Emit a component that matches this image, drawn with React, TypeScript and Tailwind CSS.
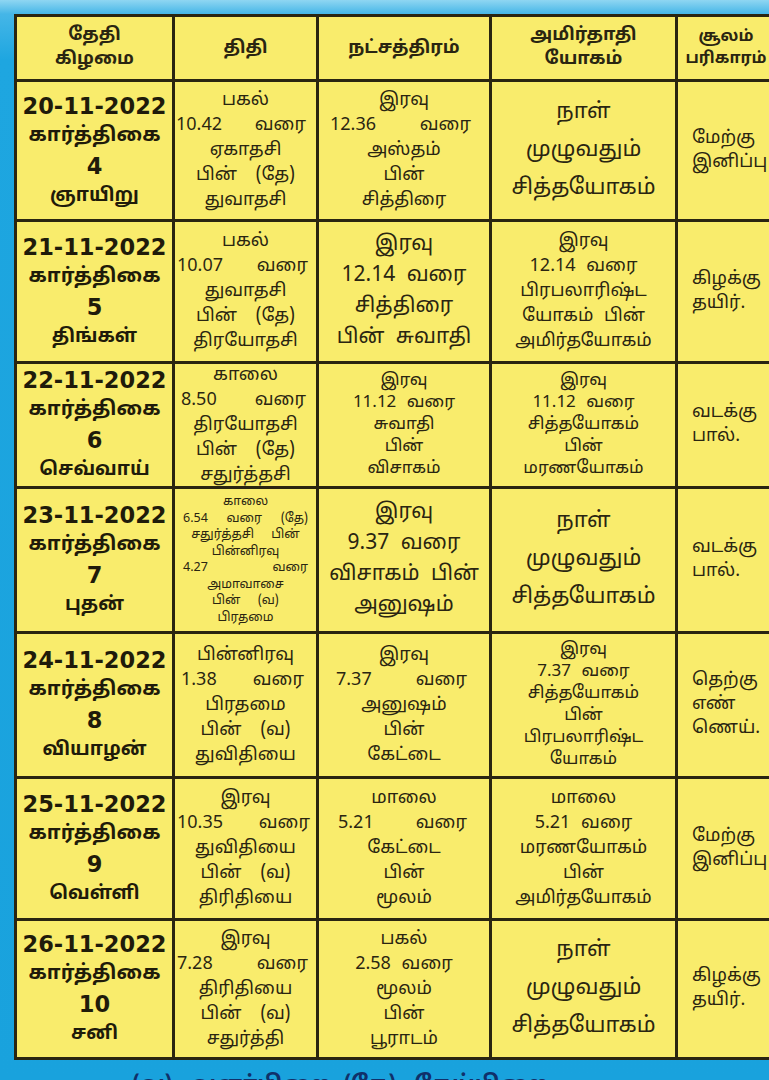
import React from "react";

type Size = "xs" | "sm" | "md" | "lg" | "lg4";
type Cell = { lines: string[]; size: Size; justify?: boolean; pad?: string };

const rows: { date: string; num: string; day: string; cells: Cell[] }[] = [
  {
    date: "20-11-2022",
    num: "4",
    day: "ஞாயிறு",
    cells: [
      { lines: ["பகல்", "10.42 வரை", "ஏகாதசி", "பின் (தே)", "துவாதசி"], size: "md", justify: true, pad: "pl-[1px] pr-[10px]" },
      { lines: ["இரவு", "12.36 வரை", "அஸ்தம்", "பின்", "சித்திரை"], size: "md", justify: true, pad: "pl-[11px] pr-[18px]" },
      { lines: ["நாள்", "முழுவதும்", "சித்தயோகம்"], size: "lg" },
      { lines: ["மேற்கு", "இனிப்பு"], size: "md" },
    ],
  },
  {
    date: "21-11-2022",
    num: "5",
    day: "திங்கள்",
    cells: [
      { lines: ["பகல்", "10.07 வரை", "துவாதசி", "பின் (தே)", "திரயோதசி"], size: "md", justify: true, pad: "pl-[2px] pr-[8px]" },
      { lines: ["இரவு", "12.14 வரை", "சித்திரை", "பின் சுவாதி"], size: "lg4" },
      { lines: ["இரவு", "12.14 வரை", "பிரபலாரிஷ்ட", "யோகம் பின்", "அமிர்தயோகம்"], size: "md" },
      { lines: ["கிழக்கு", "தயிர்."], size: "md" },
    ],
  },
  {
    date: "22-11-2022",
    num: "6",
    day: "செவ்வாய்",
    cells: [
      { lines: ["காலை", "8.50 வரை", "திரயோதசி", "பின் (தே)", "சதுர்த்தசி"], size: "md", justify: true, pad: "pl-[6px] pr-[10px]" },
      { lines: ["இரவு", "11.12 வரை", "சுவாதி", "பின்", "விசாகம்"], size: "sm" },
      { lines: ["இரவு", "11.12 வரை", "சித்தயோகம்", "பின்", "மரணயோகம்"], size: "sm" },
      { lines: ["வடக்கு", "பால்."], size: "md" },
    ],
  },
  {
    date: "23-11-2022",
    num: "7",
    day: "புதன்",
    cells: [
      {
        lines: ["காலை", "6.54 வரை (தே)", "சதுர்த்தசி பின்", "பின்னிரவு", "4.27 வரை", "அமாவாசை", "பின் (வ)", "பிரதமை"],
        size: "xs",
        justify: true,
        pad: "px-[8px]",
      },
      { lines: ["இரவு", "9.37 வரை", "விசாகம் பின்", "அனுஷம்"], size: "lg4" },
      { lines: ["நாள்", "முழுவதும்", "சித்தயோகம்"], size: "lg" },
      { lines: ["வடக்கு", "பால்."], size: "md" },
    ],
  },
  {
    date: "24-11-2022",
    num: "8",
    day: "வியாழன்",
    cells: [
      { lines: ["பின்னிரவு", "1.38 வரை", "பிரதமை", "பின் (வ)", "துவிதியை"], size: "md", justify: true, pad: "pl-[6px] pr-[12px]" },
      { lines: ["இரவு", "7.37 வரை", "அனுஷம்", "பின்", "கேட்டை"], size: "md", justify: true, pad: "pl-[17px] pr-[22px]" },
      { lines: ["இரவு", "7.37 வரை", "சித்தயோகம்", "பின்", "பிரபலாரிஷ்ட", "யோகம்"], size: "sm" },
      { lines: ["தெற்கு", "எண்", "ணெய்."], size: "md" },
    ],
  },
  {
    date: "25-11-2022",
    num: "9",
    day: "வெள்ளி",
    cells: [
      { lines: ["இரவு", "10.35 வரை", "துவிதியை", "பின் (வ)", "திரிதியை"], size: "md", justify: true, pad: "pl-[2px] pr-[6px]" },
      { lines: ["மாலை", "5.21 வரை", "கேட்டை", "பின்", "மூலம்"], size: "md", justify: true, pad: "pl-[19px] pr-[22px]" },
      { lines: ["மாலை", "5.21 வரை", "மரணயோகம்", "பின்", "அமிர்தயோகம்"], size: "md" },
      { lines: ["மேற்கு", "இனிப்பு"], size: "md" },
    ],
  },
  {
    date: "26-11-2022",
    num: "10",
    day: "சனி",
    cells: [
      { lines: ["இரவு", "7.28 வரை", "திரிதியை", "பின் (வ)", "சதுர்த்தி"], size: "md", justify: true, pad: "pl-[2px] pr-[8px]" },
      { lines: ["பகல்", "2.58 வரை", "மூலம்", "பின்", "பூராடம்"], size: "md" },
      { lines: ["நாள்", "முழுவதும்", "சித்தயோகம்"], size: "lg" },
      { lines: ["கிழக்கு", "தயிர்."], size: "md" },
    ],
  },
];

const rowH = ["h-[137px]", "h-[139px]", "h-[122px]", "h-[142px]", "h-[142px]", "h-[139px]", "h-[136px]"];

const sizeCls: Record<Size, string> = {
  xs: "text-[12.5px] leading-[16.5px]",
  sm: "text-[17px] leading-[22px]",
  md: "text-[18px] leading-[25px]",
  lg: "text-[22px] leading-[38px]",
  lg4: "text-[21px] leading-[31px]",
};

const font = { fontFamily: '"Noto Sans Tamil", "Lohit Tamil", "Noto Sans", "DejaVu Sans", sans-serif' } as React.CSSProperties;

function Line({ text, justify, pad }: { text: string; justify?: boolean; pad: string }) {
  const parts = text.split(" ");
  if (justify && parts.length > 1 && /^[0-9]/.test(parts[0])) {
    return (
      <div className={`flex w-full justify-between ${pad}`}>
        {parts.map((p, i) => (
          <span key={i}>{p}</span>
        ))}
      </div>
    );
  }
  if (justify) {
    return <div className="w-full text-center [word-spacing:14px]">{text}</div>;
  }
  return <div className="w-full text-center [word-spacing:6px]">{text}</div>;
}

function DataCell({ cell, h }: { cell: Cell; h: string }) {
  return (
    <div className={`flex ${h} flex-col items-center justify-center bg-[#f9ec6c] text-[#2a2511] ${sizeCls[cell.size]}`}>
      {cell.lines.map((l, i) => (
        <Line key={i} text={l} justify={cell.justify} pad={cell.pad ?? "px-[8px]"} />
      ))}
    </div>
  );
}

export default function App() {
  return (
    <div
      className="relative h-[1080px] w-[769px] overflow-hidden bg-[linear-gradient(180deg,#8fd6f2_0px,#45b6e7_14px,#1ea6e0_60px,#19a2dd_100%)] pl-[14px] pt-[14px]"
      style={font}
    >
      <div className="grid w-[800px] grid-cols-[155px_141px_170px_183px_140px] gap-[3px] bg-[#2a2511] p-[3px]">
        {/* header */}
        <div className="flex h-[62px] flex-col items-center justify-center bg-[#f9ec6c] text-[18px] font-bold leading-[24px] text-[#2a2511]">
          <div>தேதி</div>
          <div>கிழமை</div>
        </div>
        <div className="flex h-[62px] items-center justify-center bg-[#f9ec6c] text-[18px] font-bold text-[#2a2511]">திதி</div>
        <div className="flex h-[62px] items-center justify-center bg-[#f9ec6c] text-[18px] font-bold text-[#2a2511]">நட்சத்திரம்</div>
        <div className="flex h-[62px] flex-col items-center justify-center bg-[#f9ec6c] text-[18px] font-bold leading-[24px] text-[#2a2511]">
          <div>அமிர்தாதி</div>
          <div>யோகம்</div>
        </div>
        <div className="flex h-[62px] flex-col justify-center bg-[#f9ec6c] text-[16px] font-bold leading-[22px] text-[#2a2511]">
          <div className="w-[96px] text-center">சூலம்</div>
          <div className="w-[96px] text-center">பரிகாரம்</div>
        </div>

        {rows.map((r, ri) => (
          <React.Fragment key={r.date}>
            <div className={`flex ${rowH[ri]} flex-col items-center justify-center bg-[#f9ec6c] font-bold leading-[30px] text-[#1f1b0a]`}>
              <div className="text-[22.5px]" style={{ fontFamily: '"DejaVu Sans", sans-serif' }}>
                {r.date}
              </div>
              <div className="text-[20px]">கார்த்திகை</div>
              <div className="text-[22.5px]" style={{ fontFamily: '"DejaVu Sans", sans-serif' }}>
                {r.num}
              </div>
              <div className="text-[19px]">{r.day}</div>
            </div>
            <DataCell cell={r.cells[0]} h={rowH[ri]} />
            <DataCell cell={r.cells[1]} h={rowH[ri]} />
            <DataCell cell={r.cells[2]} h={rowH[ri]} />
            <div className={`flex ${rowH[ri]} flex-col items-start justify-center bg-[#f9ec6c] pl-[14px] text-[18px] leading-[24px] text-[#2a2511]`}>
              {r.cells[3].lines.map((l, i) => (
                <div key={i}>{l}</div>
              ))}
            </div>
          </React.Fragment>
        ))}
      </div>
      <div className="mt-[9px] pl-[118px] text-[22px] font-bold text-[#10306a]">(வ) - வளர்பிறை&nbsp;&nbsp;(தே) - தேய்பிறை</div>
    </div>
  );
}
